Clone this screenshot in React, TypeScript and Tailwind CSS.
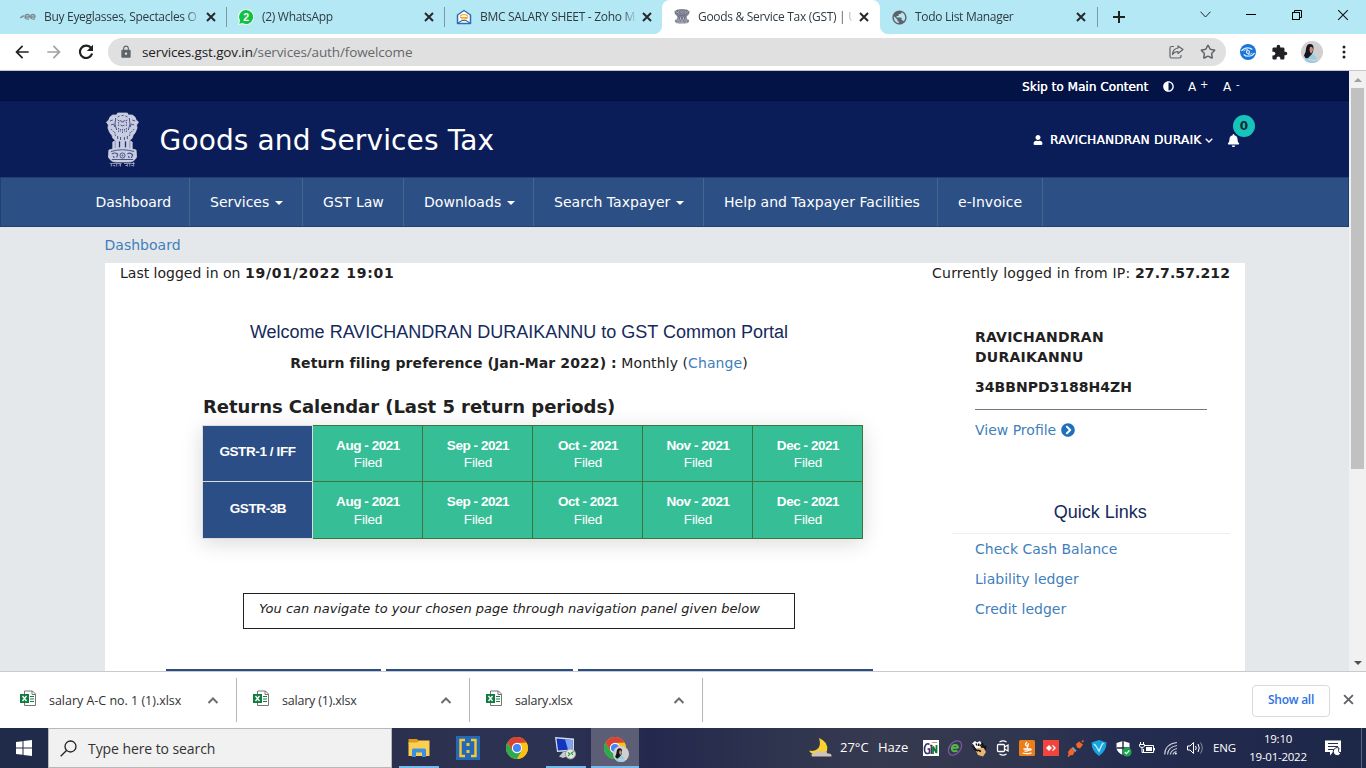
import React from "react";
import { Star } from "lucide-react";
import { FaUser, FaBell, FaAdjust, FaChevronCircleRight } from "react-icons/fa";
import { MdLock, MdExtension, MdArrowBack, MdArrowForward, MdPublic } from "react-icons/md";

const SEGOE = "font-['Open_Sans','Noto_Sans',sans-serif]";
const VERDANA = "font-['DejaVu_Sans',sans-serif]";
const ARIAL = "font-['Liberation_Sans',sans-serif]";

function Cross({ size = 10, width = 2, color = "#26282b" }: { size?: number; width?: number; color?: string }) {
  return (
    <svg width={size} height={size} viewBox="0 0 10 10" className="shrink-0">
      <path d="M1 1 L9 9 M9 1 L1 9" stroke={color} strokeWidth={width} fill="none" />
    </svg>
  );
}

function Emblem({ w, h, color, back, caption }: { w: number; h: number; color: string; back: string; caption?: boolean }) {
  return (
    <svg width={w} height={h} viewBox="0 0 34 56" preserveAspectRatio="none" className={"shrink-0 " + (caption ? "mt-px" : "")}>
      <g fill={color} stroke={color} strokeWidth="0.8" strokeLinejoin="round">
        <path d="M11 3 L12 1 H22 L23 3 L27 3 Q31 5 31 8 L33.500 10 L31.500 13 L32 16 Q30 22 28 23 L27 26 L24 29 L10 29 L7 26 L6 23 Q4 22 2 16 L2.500 13 L0.500 10 L3 8 Q3 5 7 3 Z" />
        <path d="M10 28 H13 V38 H10Z M15 28 H19 V38 H15Z M21 28 H24 V38 H21Z M7 30 L9 29 V37 L7 37Z M27 30 L25 29 V37 L27 37Z" />
        <path d="M3 38 Q17 33 31 38 L31.500 45 Q29 50 24 50 L10 50 Q5 50 2.500 45 Z" />
      </g>
      <g fill="none" stroke={back} strokeWidth="1" opacity="0.75">
        <path d="M12 5 L14 4 M16 3.5 L18 3.5 M20 4 L22 5 M12 8 L14 9 M20 9 L22 8 M15 8 L16 10 L18 10 L19 8 M15 13 Q17 15 19 13" />
        <path d="M4 9 L7 8 M5 13 L8 12 L9 15 M30 9 L27 8 M29 13 L26 12 L25 15 M10 6 Q8 12 11 18 M24 6 Q26 12 23 18" />
        <path d="M5 17 L8 20 M29 17 L26 20 M13 16 L13 21 M17 17 L17 22 M21 16 L21 21 M9 20 L10 25 M25 20 L24 25 M13 10 L13 14 M21 10 L21 14 M15 17 L15 20 M19 17 L19 20" strokeDasharray="1.5 1" />
        <path d="M12 24 L12 27 M15 25 L15 28 M19 25 L19 28 M22 24 L22 27" />
        <path d="M5 39.5 Q17 36 29 39.5 M6 47.5 L28 47.5" />
        <circle cx="17" cy="43.500" r="2.600" /><circle cx="17" cy="43.500" r="0.600" />
        <path d="M6 42 Q9 40 12 42 L11 45.500 M7.500 44 L8.500 46 M22 42 Q25 40 27.500 43 L26 46 M23 44 L24 46" strokeWidth="1.200" />
      </g>
      {caption && (
        <path d="M4 51.500 H16 M18.500 51.500 H29.500 M5.500 52 V54.500 M7 53.500 H9 V54.500 M11 52 V54.500 M13 53 H15 M15 52 V54.500 M20 53.500 H22 M22 52 V54.500 M24.500 52 V54.500 M26 53.500 H28 M28.500 50 V54.500" stroke={color} strokeWidth="0.8" fill="none" opacity="0.85" />
      )}
    </svg>
  );
}

function LensIcon() {
  return (
    <svg width="16" height="16" viewBox="0 0 16 16">
      <path d="M0 9 L3 7 M1.500 9 Q1.500 7 4 7 M5.500 8 H9.500 Q9.500 5.500 7.500 5.500 Q5 5.500 5 8 Q5 10.500 9 10 M11 8 H15 Q15 5.500 13 5.500 Q10.700 5.500 10.700 8 Q10.700 10.500 15 10" fill="none" stroke="#7d8c92" strokeWidth="1.3" />
    </svg>
  );
}

function WhatsAppIcon() {
  return (
    <svg width="16" height="16" viewBox="0 0 16 16">
      <path d="M8 0 A8 8 0 1 1 4.500 15.200 L0 16 L1 12 A8 8 0 0 1 8 0Z" fill="#e8fbef" />
      <path d="M8.200 1 A7 7 0 1 1 4.700 14.100 L1.300 14.800 L2.100 11.500 A7 7 0 0 1 8.200 1Z" fill="#12c143" />
      <text x="8.200" y="11.800" fontSize="10.500" fontWeight="700" fill="#fff" textAnchor="middle" fontFamily="Liberation Sans">2</text>
    </svg>
  );
}

function ZohoMailIcon() {
  return (
    <svg width="16" height="16" viewBox="0 0 16 16">
      <path d="M1.500 6 L8 1.500 L14.500 6 V14.500 H1.500Z" fill="#fff" stroke="#2f6cb8" strokeWidth="1.500" strokeLinejoin="round" />
      <path d="M2 14 L6 11.500 H10 L14 14" fill="none" stroke="#2f6cb8" strokeWidth="1.100" />
      <path d="M4 7.500 Q5 5.500 8 5.500 Q11 5.500 12 7.500 M4 8.500 H11 M5 9.500 Q9 11 12 8.500" fill="none" stroke="#f4a51c" strokeWidth="1.200" />
    </svg>
  );
}

function Tab({ icon, title, active, sep, shift }: { icon: React.ReactNode; title: string; active?: boolean; sep?: boolean; shift?: boolean }) {
  return (
    <div className={"relative flex h-full w-[218px] shrink-0 items-center " + (active ? "rounded-t-lg bg-white " : "") + (shift ? "pl-[11px]" : "pl-3")}>
      {sep && <span className="absolute top-[7px] left-0 h-5 w-px bg-[#7c9aa2]" />}
      {active && (
        <>
          <span className="absolute bottom-0 -left-2 h-2 w-2 bg-[radial-gradient(circle_at_0_0,#b4e8f4_7.5px,#ffffff_8.5px)]" />
          <span className="absolute -right-2 bottom-0 h-2 w-2 bg-[radial-gradient(circle_at_100%_0,#b4e8f4_7.5px,#ffffff_8.5px)]" />
        </>
      )}
      <span className="flex h-4 w-4 shrink-0 items-center justify-center">{icon}</span>
      <span className={"ml-2 shrink-0 text-[12px] leading-[18px] tracking-[-0.3px] whitespace-nowrap text-[#2e3b40] [mask-image:linear-gradient(to_right,black_142px,transparent_157px)] " + (active || shift ? "w-[154px]" : "w-[155px]")}>
        {title}
      </span>
      <span className="ml-[7px] flex"><Cross /></span>
    </div>
  );
}

function Avatar({ size }: { size: number }) {
  return (
    <svg width={size} height={size} viewBox="0 0 22 22" className="shrink-0">
      <clipPath id={"av" + size}><circle cx="11" cy="11" r="11" /></clipPath>
      <g clipPath={"url(#av" + size + ")"}>
        <rect width="22" height="22" fill="#d0d0d0" />
        <path d="M3.500 22 Q5 14 9 12.500 Q14 13 16 18 L17.500 22Z" fill="#8ed0ec" />
        <path d="M3 14.500 Q5 11 5 8 Q5.500 3 9 3 Q12.500 3 12.500 7 L12 11 L10.500 13.500 L7 17 Q4 18 3 14.500Z" fill="#17151b" />
        <path d="M9 6 Q12 5 12 8.500 Q12 11.500 10 12.500 Q8.500 11 8.500 8.500Z" fill="#c98f7c" />
        <path d="M7.500 19 Q10 18 12 19.500 L17 18.500" stroke="#efc7b4" strokeWidth="1.500" fill="none" />
      </g>
    </svg>
  );
}

function Caret() {
  return (
    <svg width="8" height="4" viewBox="0 0 8 4" className="mt-px ml-[6px]"><path d="M0 0 H8 L4 4Z" fill="#fff" /></svg>
  );
}

function NavItem({ label, width, caret }: { label: string; width: string; caret?: boolean }) {
  return (
    <div className={"flex h-full shrink-0 items-center border-r border-[#48658f] pl-5 text-[14px] tracking-[0.04px] whitespace-nowrap text-white " + width}>
      {label}
      {caret && <Caret />}
    </div>
  );
}

const MONTHS = ["Aug - 2021", "Sep - 2021", "Oct - 2021", "Nov - 2021", "Dec - 2021"];

function CalendarRow({ name, first }: { name: string; first?: boolean }) {
  return (
    <div className="flex h-[57px]">
      <div className={"flex w-[111px] items-center justify-center border-x border-b border-[#dddddd] bg-[#2c4e86] text-[13.5px] font-bold tracking-[-0.4px] text-white " + (first ? "border-t pb-[4px]" : "pb-[3px] pl-px")}>
        {name}
      </div>
      {MONTHS.map((m) => (
        <div key={m} className={"w-[110px] border-r border-b border-[#3c763d] bg-[#36be96] pt-[11px] pl-px text-center text-[13.5px] leading-[18px] text-white " + (first ? "border-t" : "")}>
          <div className="font-bold tracking-[-0.45px]">{m}</div>
          <div className={"tracking-[-0.2px] " + (first ? "-mt-px" : "")}>Filed</div>
        </div>
      ))}
    </div>
  );
}

function ExcelIcon() {
  return (
    <svg width="17" height="17" viewBox="0 0 17 17" className="shrink-0">
      <path d="M4.500 1 H12.500 L15.500 4 V15.500 H4.500Z" fill="#fff" stroke="#767676" />
      <path d="M12 1 V4.500 H15.500" fill="none" stroke="#767676" />
      <path d="M10 6.500 H14 M10 9 H14 M10 11.500 H14" stroke="#15803f" strokeWidth="1.100" />
      <rect x="0" y="4" width="9" height="9" fill="#107c41" />
      <path d="M2.500 6 L6.500 11 M6.500 6 L2.500 11" stroke="#fff" strokeWidth="1.300" />
    </svg>
  );
}

function Download({ name, tight }: { name: string; tight?: boolean }) {
  return (
    <div className="flex h-[44px] w-[233px] items-center">
      <span className="-mt-[3px] ml-4"><ExcelIcon /></span>
      <span className={"mt-[2px] ml-3 w-[150px] text-[12.5px] whitespace-nowrap text-[#303134] " + (tight ? "tracking-[-0.2px]" : "tracking-[-0.02px]")}>{name}</span>
      <svg width="12" height="7" viewBox="0 0 12 7" className="ml-[8px]"><path d="M1.500 6 L6 1.500 L10.500 6" fill="none" stroke="#6d6d6d" strokeWidth="2" /></svg>
      <span className="ml-auto h-[44px] w-px bg-[#b5b5b5]" />
    </div>
  );
}

function Chrome({ size }: { size: number }) {
  return (
    <svg width={size} height={size} viewBox="0 0 24 24">
      <circle cx="12" cy="12" r="12" fill="#fbc116" />
      <path d="M1.600 6 A12 12 0 0 1 22.400 6 L12 6.500 L6.800 15 Z" fill="#d94235" />
      <path d="M1.600 6 A12 12 0 0 0 12 24 L17.200 15 L12 17.500 L6.800 15Z" fill="#2da94f" />
      <path d="M12 6.500 H22.600 A12 12 0 0 1 12 24 L17.200 15Z" fill="#fbc116" />
      <circle cx="12" cy="12" r="5.600" fill="#fff" />
      <circle cx="12" cy="12" r="4.400" fill="#4285f4" />
    </svg>
  );
}

function AppCell({ children, open, active }: { children: React.ReactNode; open?: boolean; active?: boolean }) {
  return (
    <div className={"relative flex h-10 items-center justify-center " + (active ? "ml-px w-12 bg-[#5b5e74]" : "w-[49px]")}>
      {children}
      {(open || active) && <span className={"absolute bottom-0 h-[2px] bg-[#76b9ed] " + (active ? "w-full" : "w-10")} />}
    </div>
  );
}

function TrayCell({ children }: { children: React.ReactNode }) {
  return <span className="flex h-10 w-6 shrink-0 items-center justify-center">{children}</span>;
}

function Tray() {
  return (
    <>
      <TrayCell>
        <svg width="16" height="16" viewBox="0 0 16 16"><rect width="16" height="16" fill="#fff" /><path d="M6.500 4.500 Q5 3 3 4.500 Q1.200 6.500 1.500 10 Q2 14 5 13.500 L6.500 13 V9 H4.500" fill="none" stroke="#33306b" strokeWidth="1.600" /><path d="M8.300 5 V14 M7.200 5.500 H9.400" stroke="#5a2050" strokeWidth="1.300" /><path d="M10 14 V6.500 L13.500 13 V5" fill="none" stroke="#0d7a3a" strokeWidth="1.800" /><path d="M9 2.500 H14" stroke="#d66" strokeWidth="0.800" /></svg>
      </TrayCell>
      <TrayCell>
        <svg width="16" height="16" viewBox="0 0 16 16"><ellipse cx="8" cy="8" rx="8" ry="5.500" transform="rotate(-50 8 8)" fill="none" stroke="#7d56a0" strokeWidth="1.300" /><path d="M4.500 8.500 L11 7.500 Q10.500 4.500 7.500 5 Q4.500 6 4.800 9 Q5.500 12.500 10.500 10.500" fill="none" stroke="#55b848" strokeWidth="1.900" /></svg>
      </TrayCell>
      <TrayCell>
        <svg width="17" height="17" viewBox="0 0 17 17"><path d="M5 7 L12 7 L15 12 L12 16.500 L7 15 L5 11Z" fill="#e5b873" /><path d="M1 3.500 L4 1 L6 2.500 L9 1 L11 4.500 L9 8 L4 8 L3 5Z" fill="#fff" /><path d="M1 6 L4 8 M2.500 8.500 L7 11 M9 6 L12 3 M10 7 L15.500 6.500 M11 4 L15 9 M5 3.500 L6 5.500 M8 3.500 L7.500 6 M7 10 L10 11.500" stroke="#14120f" strokeWidth="1.500" fill="none" /></svg>
      </TrayCell>
      <TrayCell>
        <svg width="14" height="16" viewBox="0 0 14 16" fill="none" stroke="#fff" strokeWidth="1.300"><rect x="1.500" y="4.500" width="7" height="7" rx="1" /><path d="M8.500 7 L12 5 V11 L8.500 9 M3.500 2 Q7 -0.300 10.500 2 M3.500 14 Q7 16.300 10.500 14" /></svg>
      </TrayCell>
      <TrayCell>
        <svg width="16" height="16" viewBox="0 0 16 16"><rect width="16" height="16" rx="1.500" fill="#ed7d18" /><path d="M8 2 Q5 5 8 6 Q9 7 8 8.500 M10 3.500 Q8 5 9.500 6.500 M4.500 9 H11 Q10 11.500 5.500 11 M11 9 Q13.500 9 11 10.500 M3.500 13 Q8 14.500 12.500 12.800" fill="none" stroke="#fff" strokeWidth="1.300" /></svg>
      </TrayCell>
      <TrayCell>
        <svg width="16" height="16" viewBox="0 0 16 16"><rect width="16" height="16" fill="#f0443c" /><path d="M6 5 L9 8 L6 11 L3 8Z" fill="#fff" /><path d="M9 5.500 L10 5 L13 8 L10 11 L9 10.500 L11 8Z" fill="#fff" /></svg>
      </TrayCell>
      <TrayCell>
        <svg width="17" height="17" viewBox="0 0 17 17"><path d="M9 4 L12 1.500 L16 4.500 L13 8.500 L10 7.500Z M1 12 L4 8 L8 11 L6 15 L2 15.500Z" fill="#f2662b" /><path d="M15 2 L16.500 0.500 M1 16.500 L3 14" stroke="#f2662b" strokeWidth="1.500" /><path d="M4.500 8 L6 7 L9.500 10.500 L8.500 12Z" fill="#8fa5ac" /></svg>
      </TrayCell>
      <TrayCell>
        <svg width="16" height="16" viewBox="0 0 16 16"><path d="M8 0 L15.500 2.500 Q15.500 11 8 16 Q0.500 11 0.500 2.500Z" fill="#17a5df" /><path d="M5 6 L8 11 L11 4.500 M3 4 L5 6 M11 4.500 L12.500 3" fill="none" stroke="#c8effc" strokeWidth="1.300" /></svg>
      </TrayCell>
      <TrayCell>
        <svg width="17" height="17" viewBox="0 0 17 17"><path d="M8 1 L14.500 3 V8 Q14 12.500 8 15 Q2 12.500 1.500 8 V3Z" fill="#fff" /><path d="M8 1 V15 M1.500 8 H14.500" stroke="#202a42" strokeWidth="1.400" /><circle cx="12" cy="12" r="4.600" fill="#17a64b" /><path d="M9.800 12 L11.500 13.600 L14.300 10.500" fill="none" stroke="#fff" strokeWidth="1.200" /></svg>
      </TrayCell>
      <TrayCell>
        <svg width="16" height="12" viewBox="0 0 16 12" fill="none" stroke="#fff"><path d="M5.500 3.500 H14.500 V10.500 H4.500 V7" /><path d="M15.500 6 V8.500" /><rect x="7" y="5" width="6" height="4" fill="#fff" stroke="none" /><path d="M1.500 0 V2 M4.500 0 V2 M0.500 2.500 H5.500 V4 Q5 5.500 3 5.500 Q1 5.500 0.500 4Z M3 5.500 V10.500 H5" /></svg>
      </TrayCell>
      <TrayCell>
        <svg width="14" height="14" viewBox="0 0 14 14" fill="none" stroke="#c9ccd6" strokeWidth="1.200"><path d="M0.700 13.500 Q1 3 13 1.500" /><path d="M3.500 13.500 Q4 6 13 4.500" /><path d="M6.300 13.500 Q7 9 13 7.500" /><path d="M9 13.500 Q9.500 11 12.500 10.500" /><circle cx="11.800" cy="12.500" r="1" fill="#fff" stroke="none" /></svg>
      </TrayCell>
      <TrayCell>
        <svg width="17" height="14" viewBox="0 0 17 14" fill="none" stroke="#fff"><path d="M0.500 5 H3 L6.500 1.500 V12.500 L3 9 H0.500Z" /><path d="M8.500 5 Q10 7 8.500 9 M11 3 Q13.500 7 11 11" /><path d="M13.500 1.500 Q17 7 13.500 12.500" stroke="#8a8fa2" /></svg>
      </TrayCell>
    </>
  );
}

export default function App() {
  return (
    <div className={"flex h-[768px] w-[1366px] flex-col overflow-hidden bg-white " + SEGOE}>
      <div className="flex h-[34px] shrink-0 bg-[#b4e8f4] pl-2">
        <Tab icon={<LensIcon />} title="Buy Eyeglasses, Spectacles O" />
        <Tab icon={<WhatsAppIcon />} title="(2) WhatsApp" sep />
        <Tab icon={<ZohoMailIcon />} title="BMC SALARY SHEET - Zoho M" sep />
        <Tab icon={<Emblem w={16} h={16} color="#6f7385" back="#ffffff" />} title="Goods & Service Tax (GST) | U" active />
        <Tab icon={<MdPublic size={17} color="#5f6368" className="shrink-0" />} title="Todo List Manager" shift />
        <div className="relative flex w-[84px] items-center pl-[15px]">
          <span className="absolute top-[7px] -left-px h-5 w-px bg-[#7c9aa2]" />
          <svg width="12" height="12" viewBox="0 0 12 12"><path d="M6 0 V12 M0 6 H12" stroke="#202124" strokeWidth="2" /></svg>
        </div>
        <div className="flex h-[29px] flex-1 items-center">
          <span className="flex w-[46px] justify-center"><svg width="11" height="7" viewBox="0 0 11 7"><path d="M0.500 0.700 L5.500 6 L10.500 0.700" fill="none" stroke="#222" /></svg></span>
          <span className="flex w-[46px] justify-center"><span className="h-px w-[10px] bg-black" /></span>
          <span className="flex w-[46px] justify-center"><svg width="10" height="10" viewBox="0 0 10 10" fill="none" stroke="#000"><rect x="0.500" y="2.500" width="7" height="7" /><path d="M2.500 2.500 V0.500 H9.500 V7.500 H7.500" /></svg></span>
          <span className="flex w-[46px] justify-center"><Cross size={12} width={0.9} color="#111" /></span>
        </div>
      </div>

      <div className="flex h-9 shrink-0 items-center">
        <span className="ml-3 flex"><MdArrowBack size={20} color="#1f2023" /></span>
        <span className="ml-3 flex"><MdArrowForward size={20} color="#a0a1a3" /></span>
        <svg width="16" height="16" viewBox="0 0 16 16" className="ml-[14px] shrink-0"><path d="M13.200 4.200 A6.200 6.200 0 1 0 14.100 9.500" fill="none" stroke="#1f2023" strokeWidth="2.200" /><path d="M15 0.800 V7 H8.800Z" fill="#1f2023" /></svg>
        <div className="ml-[14px] flex h-7 w-[1118px] items-center rounded-full bg-[#e0e0e0] pl-[11px]">
          <MdLock size={14} color="#5f6368" />
          <span className="ml-[9px] text-[13.5px] tracking-[-0.13px] text-[#65686c]"><span className="text-[#202124]">services.gst.gov.in</span>/services/auth/fowelcome</span>
          <svg width="15" height="14" viewBox="0 0 15 14" className="ml-auto" fill="none" stroke="#5f6368" strokeWidth="1.200"><path d="M5 1.500 H2.500 Q1 1.500 1 3 V11.500 Q1 13 2.500 13 H10.500 Q12 13 12 11.500 V10" /><path d="M9 0.900 L14 4.500 L9 8.500 V6.500 Q5.500 6.500 3.500 9.500 Q4 3.500 9 3Z" strokeLinejoin="round" /></svg>
          <Star size={16} color="#5f6368" strokeWidth={2.2} strokeLinejoin="miter" className="mr-[10px] ml-[16px]" />
        </div>
        <svg width="16" height="16" viewBox="0 0 16 16" className="ml-[14px]"><circle cx="8" cy="8" r="8" fill="#1a73d8" /><path d="M1.500 7 Q3.500 3.800 8 3.800 Q10.500 3.800 12.300 5.500 M14.500 9 Q12.500 12.200 8 12.200 Q5.500 12.200 3.700 10.500" fill="none" stroke="#dff0ff" strokeWidth="1.300" /><path d="M3.500 7 Q5 5.500 8 5.500 M12.500 9 Q11 10.500 8 10.500" fill="none" stroke="#dff0ff" strokeWidth="0.800" /><circle cx="8" cy="8" r="1.500" fill="none" stroke="#dff0ff" strokeWidth="1.200" /></svg>
        <MdExtension size={17} color="#202124" className="ml-[15px]" />
        <span className="ml-[13px]"><Avatar size={22} /></span>
        <svg width="4" height="14" viewBox="0 0 4 14" className="ml-[19px]" fill="#202124"><circle cx="2" cy="2" r="1.500" /><circle cx="2" cy="7" r="1.500" /><circle cx="2" cy="12" r="1.500" /></svg>
      </div>

      <div className="flex h-[601px] shrink-0 border-t border-[#c4c6c8]">
        <main className={"flex w-[1349px] flex-col overflow-hidden bg-[#e4e8eb] " + VERDANA}>
          <div className="flex h-[30px] shrink-0 items-center border-b border-[#020f38] bg-[#031346] pt-[2px] pl-[1022px] text-[12px] whitespace-nowrap text-white">
            <span className="w-[141px] tracking-[0.04px] [text-shadow:0.3px_0_0_white]">Skip to Main Content</span>
            <FaAdjust size={11} />
            <span className="ml-[14px] w-[12px]">A</span><span className="w-[23px] pb-[5px] text-[10px]">+</span>
            <span className="w-[13px]">A</span><span className="pb-[5px] text-[10px]">-</span>
          </div>
          <header className="flex h-[76px] shrink-0 items-center bg-[#0b1d58] pl-[106px] text-white">
            <Emblem w={33} h={56} color="#c9cde2" back="#1d2c66" caption />
            <h1 className="mt-[3px] ml-[20.6px] w-[873.4px] text-[28px] tracking-[0.12px]">Goods and Services Tax</h1>
            <FaUser size={10} className="mt-[2px]" />
            <span className="mt-[2px] ml-[7px] w-[155px] text-[12px] tracking-[0.33px] whitespace-nowrap [text-shadow:0.3px_0_0_white]">RAVICHANDRAN DURAIK</span>
            <svg width="8" height="5" viewBox="0 0 8 5" className="mt-[2px] mr-px"><path d="M0.700 0.700 L4 4 L7.300 0.700" fill="none" stroke="#fff" strokeWidth="1.300" /></svg>
            <span className="relative mt-[2px] ml-[13px]">
              <FaBell size={13} />
              <span className="absolute -top-[19px] left-[6px] flex h-[22px] w-[22px] items-center justify-center rounded-full bg-[#17c4bb] text-[12px] font-bold text-[#1a2b30]">0</span>
            </span>
          </header>
          <nav className="flex h-[50px] shrink-0 border border-[#233f70] bg-[#2c4f86]">
            <div className="flex w-[189px] shrink-0 items-center border-r border-[#48658f] pl-[94.5px] text-[14px] tracking-[-0.04px] text-white">Dashboard</div>
            <NavItem label="Services" width="w-[113px]" caret />
            <NavItem label="GST Law" width="w-[101px]" />
            <NavItem label="Downloads" width="w-[130px]" caret />
            <NavItem label="Search Taxpayer" width="w-[170px]" caret />
            <NavItem label="Help and Taxpayer Facilities" width="w-[234px]" />
            <NavItem label="e-Invoice" width="w-[105px]" />
          </nav>
          <div className="h-9 shrink-0 pt-2 pl-[104.6px] text-[14px] leading-5 text-[#3f80bb]">Dashboard</div>

          <section className="ml-[105px] w-[1140px] flex-1 bg-white text-[14px] leading-5 text-[#212121]">
            <div className="flex h-5 justify-between px-[15px]">
              <span>Last logged in on <b className="tracking-[0.75px]">19/01/2022 19:01</b></span>
              <span className="tracking-[0.19px]">Currently logged in from IP: <b className="tracking-[0.1px]">27.7.57.212</b></span>
            </div>
            <div className="flex">
              <div className="flex w-[828px] flex-col items-center">
                <h2 className={"mt-[39px] text-[18px] text-[#14295c] " + ARIAL}>Welcome RAVICHANDRAN DURAIKANNU to GST Common Portal</h2>
                <p className="mt-[11px] tracking-[0.09px] whitespace-nowrap"><b>Return filing preference (Jan-Mar 2022) :</b> Monthly (<span className="text-[#3f80bb]">Change</span>)</p>
                <div className="mt-[24px] w-[634px] pl-px text-[18px] font-bold tracking-[-0.04px] whitespace-nowrap">Returns Calendar (Last 5 return periods)</div>
                <div className={"mt-[8px] ml-[27px] w-[661px] shadow-[0_4px_20px_0_rgba(0,0,0,0.15)] " + ARIAL}>
                  <CalendarRow name="GSTR-1 / IFF" first />
                  <CalendarRow name="GSTR-3B" />
                </div>
                <div className="mt-[54px] h-9 w-[552px] border border-[#212121] pt-[5px] pl-[15px] text-[13px] tracking-[0.015px] whitespace-nowrap italic">You can navigate to your chosen page through navigation panel given below</div>
                <div className="mt-10 flex h-[2px] w-[707px] gap-[5px]">
                  <span className="w-[215px] bg-[#2c4e86]" />
                  <span className="w-[187px] bg-[#2c4e86]" />
                  <span className="w-[295px] bg-[#2c4e86]" />
                </div>
              </div>
              <aside className="ml-[19px] w-[278px]">
                <div className="mt-11 ml-[23px] w-[232px] border-b border-[#777] pb-3 font-bold">
                  <div className="w-[180px] tracking-[0.22px]">RAVICHANDRAN<br />DURAIKANNU</div>
                  <div className="mt-[10px] tracking-[0.02px]">34BBNPD3188H4ZH</div>
                </div>
                <div className="mt-[10px] ml-[23px] flex items-center text-[#3f80bb]">View Profile <FaChevronCircleRight size={14} color="#1f6fc0" className="ml-[5px]" /></div>
                <h3 className={"mt-[62px] border-b border-[#eeeeee] pb-[11px] pl-[18.500px] text-center text-[18px] text-[#14295c] " + ARIAL}>Quick Links</h3>
                <div className="ml-[23px] leading-[30px] text-[#3f80bb]">
                  <div>Check Cash Balance</div>
                  <div>Liability ledger</div>
                  <div>Credit ledger</div>
                </div>
              </aside>
            </div>
          </section>
        </main>
        <div className="flex w-[17px] flex-col items-center bg-[#f1f1f1]">
          <span className="flex h-[17px] items-center"><svg width="8" height="4" viewBox="0 0 8 4"><path d="M4 0 L8 4 H0Z" fill="#a0a0a0" /></svg></span>
          <span className="h-[381px] w-[13px] bg-[#c1c1c1]" />
          <span className="mt-auto flex h-[17px] items-center"><svg width="8" height="4" viewBox="0 0 8 4"><path d="M0 0 H8 L4 4Z" fill="#505050" /></svg></span>
        </div>
      </div>

      <div className="flex h-[57px] shrink-0 items-center border-t border-[#c9cacc] bg-white pl-1">
        <Download name="salary A-C no. 1 (1).xlsx" />
        <Download name="salary (1).xlsx" tight />
        <Download name="salary.xlsx" tight />
        <span className="mt-px ml-auto flex h-8 w-[78px] items-center justify-center rounded border border-[#d8dae0] pb-[2px] text-[12px] font-semibold tracking-[-0.25px] text-[#2b72e4]">Show all</span>
        <span className="mr-[12px] mb-[2px] ml-[13px] flex"><Cross size={11} width={1.7} color="#5f6368" /></span>
      </div>

      <div className="flex h-10 shrink-0 items-center bg-[linear-gradient(to_right,#1f2b49_0px,#2b314f_430px,#2c3252_560px,#24284d_650px,#30354f_790px,#363a50_880px,#30364f_1030px,#242c50_1120px,#1d2748_1366px)] text-white">
        <span className="flex w-12 justify-center">
          <svg width="16" height="16" viewBox="0 0 16 16" fill="#fff"><path d="M0 2 L6.500 1.200 V7.500 H0Z M7.500 1 L16 0 V7.500 H7.500Z M0 8.500 H6.500 V14.800 L0 14Z M7.500 8.500 H16 V16 L7.500 15Z" /></svg>
        </span>
        <div className="flex h-10 w-[344px] items-center border border-[#b9b9b9] bg-[#f1f1f1] pl-[11px] text-[#333]">
          <svg width="17" height="17" viewBox="0 0 17 17" fill="none" stroke="#222" strokeWidth="1.300"><circle cx="10.500" cy="6.500" r="5.500" /><path d="M6.500 10.500 L0.700 16.300" /></svg>
          <span className="ml-[11px] text-[14px] tracking-[-0.08px]">Type here to search</span>
        </div>
        <div className="ml-[2px] flex">
          <AppCell open>
            <svg width="22" height="20" viewBox="0 0 22 20"><path d="M0.500 1 H9 L11 3 V6 H0.500Z" fill="#e09b11" /><path d="M0.500 4.500 H9 L11 2.500 H21.500 V18 H0.500Z" fill="#fccf53" /><path d="M4 19 V12 Q4 10.500 5.500 10.500 H16.500 Q18 10.500 18 12 V19 H14 V14.500 H8 V19Z" fill="#3a91dc" /></svg>
          </AppCell>
          <AppCell>
            <svg width="24" height="24" viewBox="0 0 24 24"><rect width="24" height="24" fill="#2468b8" /><path d="M9 4 H4.500 V20 H9 M15 4 H19.500 V20 H15" fill="none" stroke="#f9c62f" strokeWidth="2.400" /><rect x="10.500" y="7" width="3" height="3" fill="#f9c62f" /><rect x="10.500" y="14" width="3" height="3" fill="#f9c62f" /></svg>
          </AppCell>
          <AppCell><Chrome size={22} /></AppCell>
          <AppCell open>
            <svg width="23" height="24" viewBox="0 0 23 24"><path d="M1 1 L20 2.500 V15 L3 16Z" fill="#d8dde6" /><path d="M2.500 2.500 L18.500 4 V13.500 L4 14.500Z" fill="#1234c0" /><path d="M11 3.500 L18.500 4 V13.500 L14 13.800Z" fill="#7fa4ee" /><path d="M9 16 H13 L14 20 L9 22 L5 20.500Z" fill="#c5c8cc" /><circle cx="16.500" cy="18" r="5" fill="#e4e6e4" stroke="#9aa09a" /><path d="M14 16.500 L16 18 L14 20 M19.500 15.500 L17.500 17 L19 19" fill="none" stroke="#2a9a3a" strokeWidth="1.200" /></svg>
          </AppCell>
          <AppCell active>
            <span className="relative flex"><Chrome size={22} /><span className="absolute top-[9px] left-[9px]"><Avatar size={16} /></span></span>
          </AppCell>
        </div>
        <svg width="24" height="20" viewBox="0 0 24 20" className="ml-[170px] shrink-0"><path d="M10 0 Q20 4 18 13 Q14 19 4 16 Q0 14 0.500 12.500 Q6 14 9.500 10 Q12 6 10 0Z" fill="#fbd12e" /><path d="M3 18.500 Q1 15 6 15 Q9 11 13 14 Q17 11.500 18.500 15.500 Q23 15 22.500 18.500Z" fill="#cfc4b6" /></svg>
        <span className="ml-[7px] w-[38px] text-[13px] whitespace-nowrap">27°C</span>
        <span className="w-[41px] text-[13px]">Haze</span>
        <Tray />
        <span className="ml-[6px] w-[34px] text-[11.5px] tracking-[-0.2px]">ENG</span>
        <span className="w-[62px] text-center text-[11.5px] leading-[18px] tracking-[-0.25px] whitespace-nowrap">19:10<br />19-01-2022</span>
        <svg width="17" height="17" viewBox="0 0 17 17" className="ml-[16px] shrink-0"><path d="M0 0.500 H16 V12 H8 L5 15.500 V12 H0Z" fill="#fff" /><path d="M3 3.500 H13 M3 6.500 H13 M3 9.500 H9" stroke="#27304f" strokeWidth="1.200" /><path d="M14 8 A4 4 0 1 0 16 13 Q12.500 13 14 8Z" fill="#fff" stroke="#1d2748" strokeWidth="1" /></svg>
        <span className="mr-1 ml-auto h-10 w-px bg-[#5d6580]" />
      </div>
    </div>
  );
}
